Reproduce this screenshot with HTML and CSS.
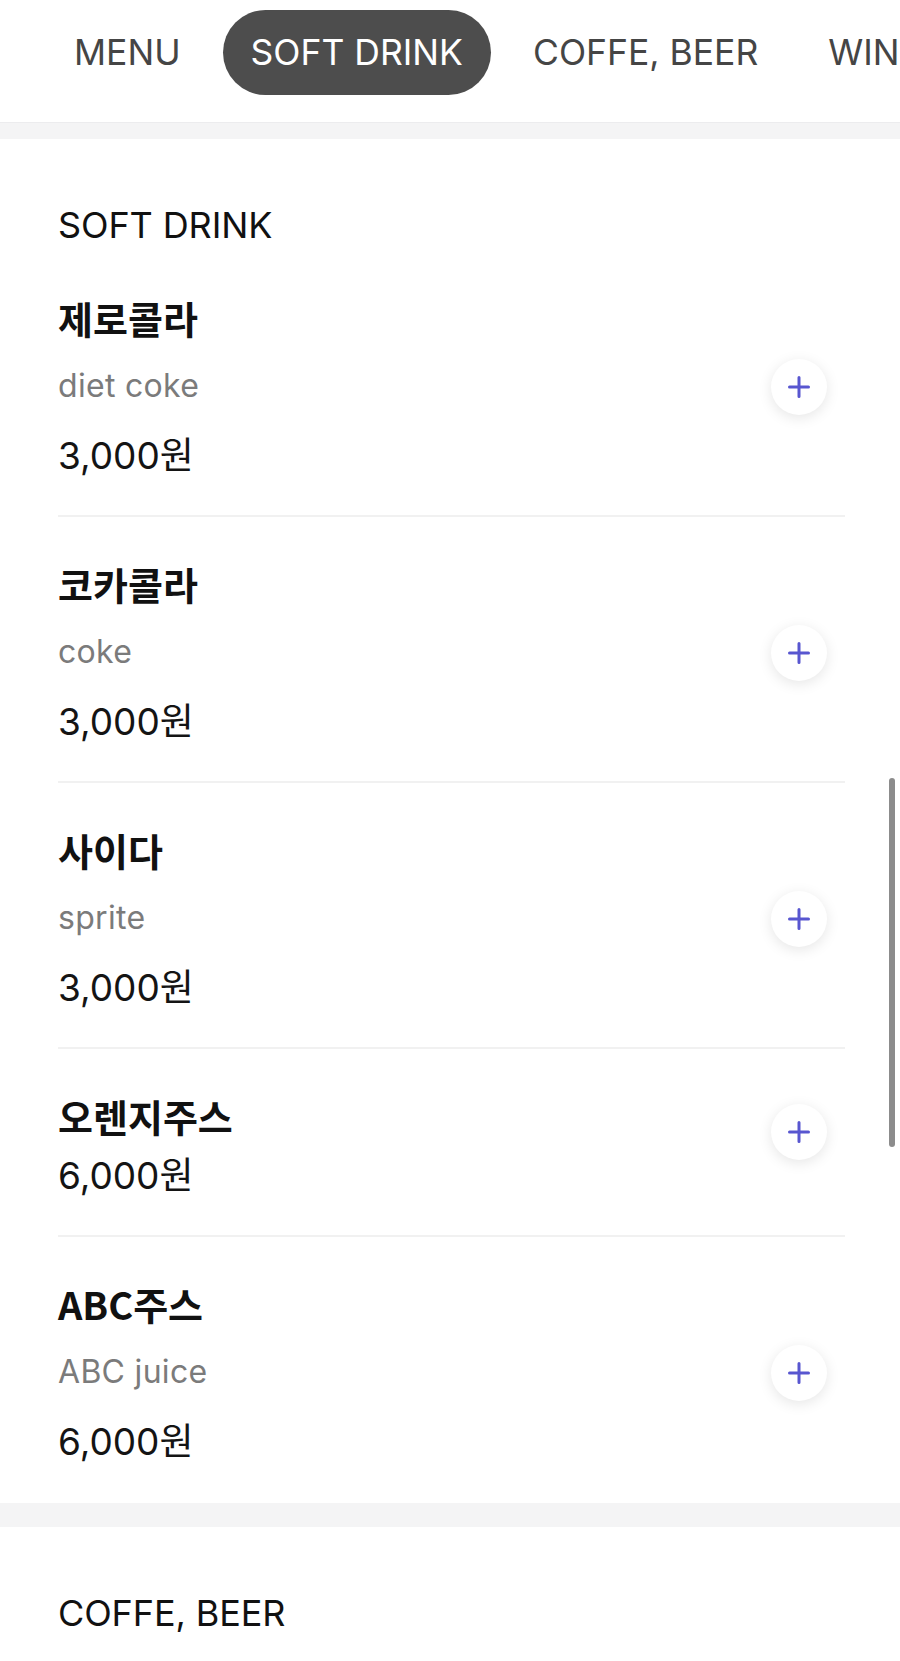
FILE: index.html
```html
<!DOCTYPE html>
<html lang="ko">
<head>
<meta charset="utf-8">
<title>Menu</title>
<link rel="stylesheet" href="styles.css">
</head>
<body>
<nav class="tabs">
  <a class="tab">MENU</a>
  <a class="tab tab--active">SOFT DRINK</a>
  <a class="tab">COFFE, BEER</a>
  <a class="tab">WINE</a>
</nav>
<div class="band band--top"></div>

<section class="section">
  <h2 class="section-title">SOFT DRINK</h2>
  <ul class="items">
    <li class="item">
      <div class="info">
        <div class="name">제로콜라</div>
        <div class="desc">diet coke</div>
        <div class="price">3,000원</div>
      </div>
      <button class="add" aria-label="add"><svg viewBox="0 0 22 22" width="22" height="22"><path d="M11 1.5v19M1.5 11h19"/></svg></button>
    </li>
    <li class="item">
      <div class="info">
        <div class="name">코카콜라</div>
        <div class="desc">coke</div>
        <div class="price">3,000원</div>
      </div>
      <button class="add" aria-label="add"><svg viewBox="0 0 22 22" width="22" height="22"><path d="M11 1.5v19M1.5 11h19"/></svg></button>
    </li>
    <li class="item">
      <div class="info">
        <div class="name">사이다</div>
        <div class="desc">sprite</div>
        <div class="price">3,000원</div>
      </div>
      <button class="add" aria-label="add"><svg viewBox="0 0 22 22" width="22" height="22"><path d="M11 1.5v19M1.5 11h19"/></svg></button>
    </li>
    <li class="item item--short">
      <div class="info">
        <div class="name">오렌지주스</div>
        <div class="price">6,000원</div>
      </div>
      <button class="add" aria-label="add"><svg viewBox="0 0 22 22" width="22" height="22"><path d="M11 1.5v19M1.5 11h19"/></svg></button>
    </li>
    <li class="item">
      <div class="info">
        <div class="name">ABC주스</div>
        <div class="desc">ABC juice</div>
        <div class="price">6,000원</div>
      </div>
      <button class="add" aria-label="add"><svg viewBox="0 0 22 22" width="22" height="22"><path d="M11 1.5v19M1.5 11h19"/></svg></button>
    </li>
  </ul>
</section>
<div class="band band--section"></div>

<section class="section">
  <h2 class="section-title">COFFE, BEER</h2>
</section>

<div class="scroll-thumb"></div>
</body>
</html>
```

FILE: styles.css
```css
* { box-sizing: border-box; }

html, body {
  margin: 0;
  padding: 0;
  height: 100%;
  overflow: hidden;
  background: #ffffff;
}

body {
  font-family: Inter, "Noto Sans CJK KR", "Noto Sans", sans-serif;
  color: #111111;
}

.tabs {
  display: flex;
  gap: 14px;
  padding: 10px 0 27px 46px;
  overflow: hidden;
  white-space: nowrap;
  background: #ffffff;
}

.tab {
  flex: none;
  height: 85px;
  padding: 0 28px;
  display: flex;
  align-items: center;
  border-radius: 43px;
  font-size: 35.5px;
  font-weight: 400;
  color: #454545;
  text-decoration: none;
}

.tab--active {
  background: #4d4d4d;
  color: #ffffff;
}

.band {
  background: #f4f4f5;
}

.band--top {
  height: 17px;
  border-top: 1px solid #ececee;
}

.band--section {
  height: 24px;
}

.section {
  padding: 62px 55px 2px 58px;
}

.section-title {
  margin: 0 0 2px;
  font-size: 36px;
  line-height: 48px;
  font-weight: 400;
  color: #111111;
  letter-spacing: -0.1px;
}

.items {
  list-style: none;
  margin: 0;
  padding: 0;
}

.item {
  display: flex;
  align-items: center;
  justify-content: space-between;
  padding: 43px 0 35px;
  border-bottom: 2px solid #f1f1f1;
}

.item:last-child {
  border-bottom: none;
}

.info {
  display: flex;
  flex-direction: column;
}

.name {
  font-family: "Noto Sans CJK KR", Inter, sans-serif;
  font-size: 38px;
  line-height: 48px;
  font-weight: 700;
  color: #111111;
}

.desc {
  margin: 22px 0 12px;
  font-size: 32px;
  line-height: 44px;
  color: #7b7b7b;
  letter-spacing: 0.3px;
}

.price {
  margin-top: 12px;
  font-size: 37px;
  line-height: 48px;
  color: #141414;
}

.add {
  flex: none;
  width: 56px;
  height: 56px;
  margin-right: 18px;
  padding: 0;
  border: none;
  border-radius: 50%;
  background: #ffffff;
  box-shadow: 0 3px 14px rgba(0, 0, 0, 0.1);
  display: flex;
  align-items: center;
  justify-content: center;
}

.add svg path {
  stroke: #5856d0;
  stroke-width: 3;
  stroke-linecap: round;
  fill: none;
}

.item--short .add {
  margin-bottom: 28px;
}

.scroll-thumb {
  position: fixed;
  left: 889px;
  top: 778px;
  width: 6px;
  height: 369px;
  border-radius: 3px;
  background: #8c8c8c;
}
```
